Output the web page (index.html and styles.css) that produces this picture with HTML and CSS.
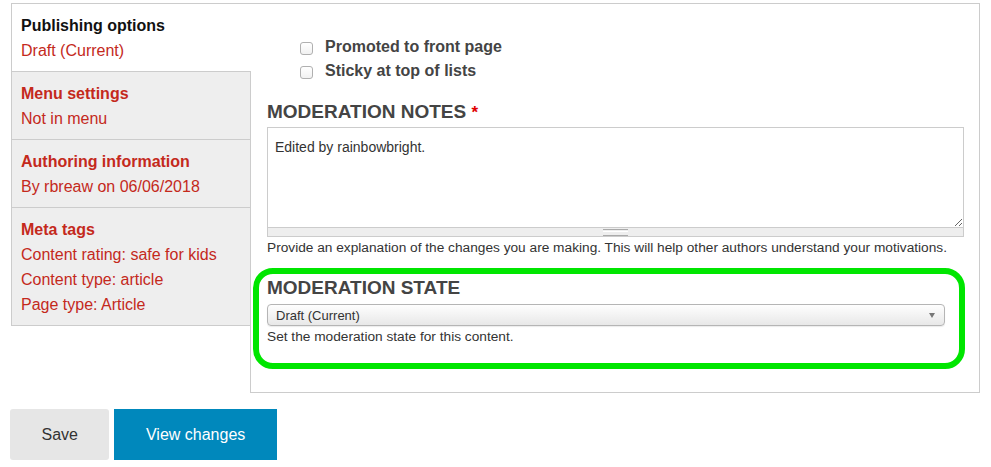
FILE: index.html
```html
<!DOCTYPE html>
<html lang="en">
<head>
    <meta http-equiv="Content-Type" content="text/html; charset=UTF-8">
    <title>Edit content</title>
    <link rel="stylesheet" href="styles.css">
</head>
<body>
    <!-- Vertical Tabs Section -->
    <div class="vertical-tabs">
        <ul class="tabs-menu">
            <li class="tab selected">
                <strong class="tab-title">Publishing options</strong>
                <span class="tab-summary">Draft (Current)</span>
            </li>
            <li class="tab">
                <strong class="tab-title">Menu settings</strong>
                <span class="tab-summary">Not in menu</span>
            </li>
            <li class="tab">
                <strong class="tab-title">Authoring information</strong>
                <span class="tab-summary">By rbreaw on 06/06/2018</span>
            </li>
            <li class="tab">
                <strong class="tab-title">Meta tags</strong>
                <span class="tab-summary">Content rating: safe for kids</span>
                <span class="tab-summary">Content type: article</span>
                <span class="tab-summary">Page type: Article</span>
            </li>
        </ul>

        <div class="tabs-pane">
            <div class="checkbox-list">
                <label class="checkbox-item"><input type="checkbox">Promoted to front page</label>
                <label class="checkbox-item"><input type="checkbox">Sticky at top of lists</label>
            </div>

            <div class="field">
                <h3 class="field-label">MODERATION NOTES <span class="required">*</span></h3>
                <div class="textarea-wrap">
                    <textarea>Edited by rainbowbright.</textarea>
                    <div class="grippie"></div>
                </div>
                <div class="description">Provide an explanation of the changes you are making. This will help other authors understand your motivations.</div>
            </div>

            <!-- Highlighted field -->
            <div class="field highlight">
                <h3 class="field-label">MODERATION STATE</h3>
                <div class="select-wrap">
                    <select>
                        <option>Draft (Current)</option>
                        <option>Published</option>
                    </select>
                </div>
                <div class="description">Set the moderation state for this content.</div>
            </div>
        </div>
    </div>

    <!-- Form Actions -->
    <div class="actions">
        <button class="btn">Save</button>
        <button class="btn btn-primary">View changes</button>
    </div>
</body>
</html>
```

FILE: styles.css
```css
/* General Reset */
* {
    margin: 0;
    padding: 0;
    box-sizing: border-box;
    font-family: "Liberation Sans", Arial, sans-serif;
}

body {
    background-color: #FFFFFF;
    color: #333333;
}

/* Vertical Tabs */
.vertical-tabs {
    display: flex;
    align-items: flex-start;
    width: 969px;
    margin: 3px 0 0 11px;
}

.tabs-menu {
    list-style: none;
    width: 239px;
    flex-shrink: 0;
    border-left: 1px solid #CCCCCC;
    border-top: 1px solid #CCCCCC;
}

.tab {
    position: relative;
    padding: 9px 9px 8px;
    background-color: #EEEEEE;
    border-bottom: 1px solid #CCCCCC;
    font-size: 16px;
    line-height: 25px;
    color: #C4291C;
}

.tab.selected {
    background-color: #FFFFFF;
    margin-right: -1px;
    z-index: 1;
}

.tab-title,
.tab-summary {
    display: block;
}

.tab.selected .tab-title {
    color: #111111;
}

/* Tab Pane */
.tabs-pane {
    flex-grow: 1;
    border: 1px solid #CCCCCC;
    padding: 31px 15px 23px 16px;
}

.checkbox-item {
    display: flex;
    align-items: center;
    padding-left: 33px;
    font-size: 16px;
    font-weight: bold;
    line-height: 24px;
    color: #444444;
}

.checkbox-item input {
    appearance: none;
    -webkit-appearance: none;
    width: 13px;
    height: 13px;
    margin: 3px 12px 0 0;
    border: 1px solid #B0B0B0;
    border-radius: 3px;
    background: linear-gradient(#FFFFFF, #F1F1F1);
}

.field {
    margin-top: 18px;
}

.field-label {
    font-size: 19px;
    line-height: 22px;
    font-weight: bold;
    color: #444444;
}

.required {
    color: #E00000;
    font-size: 17px;
}

/* Textarea */
.textarea-wrap {
    margin-top: 3px;
}

.textarea-wrap textarea {
    display: block;
    width: 100%;
    height: 101px;
    padding: 10px 7px;
    border: 1px solid #CCCCCC;
    font-size: 14px;
    line-height: 18px;
    color: #333333;
    resize: vertical;
    outline: none;
}

.grippie {
    height: 9px;
    background-color: #EEEEEE;
    border: 1px solid #CCCCCC;
    border-top: none;
    display: flex;
    justify-content: center;
    align-items: center;
}

.grippie::before {
    content: "";
    width: 25px;
    height: 5px;
    border-top: 1px solid #AAAAAA;
    border-bottom: 1px solid #AAAAAA;
    background: linear-gradient(#FFFFFF 1px, #AAAAAA 1px, #AAAAAA 2px, #FFFFFF 2px);
    background-size: 100% 1px;
    background-position: 0 1px;
    background-repeat: no-repeat;
}

.description {
    margin-top: 3px;
    font-size: 13.7px;
    line-height: 16px;
    color: #333333;
}

/* Highlighted field */
.highlight {
    margin: 12px -1px 0 -14px;
    padding: 3px 14px 18px 8px;
    border: 6px solid #00E600;
    border-radius: 20px;
}

.select-wrap {
    position: relative;
    margin-top: 5px;
}

.select-wrap select {
    appearance: none;
    -webkit-appearance: none;
    display: block;
    width: 100%;
    height: 22px;
    padding: 0 8px;
    border: 1px solid #B5B5B5;
    border-radius: 4px;
    background: linear-gradient(#FEFEFE, #E8E8E8);
    font-size: 13px;
    color: #333333;
    box-shadow: 0 1px 1px rgba(0, 0, 0, 0.08);
}

.select-wrap::after {
    content: "";
    position: absolute;
    right: 10px;
    top: 9px;
    border-left: 3px solid transparent;
    border-right: 3px solid transparent;
    border-top: 5px solid #777777;
}

/* Form Actions */
.actions {
    display: flex;
    gap: 5px;
    margin: 16px 0 0 10px;
}

.btn {
    height: 51px;
    padding: 0 31.5px;
    border: none;
    border-radius: 3px;
    background-color: #E6E6E6;
    color: #333333;
    font-size: 16px;
    cursor: pointer;
}

.btn-primary {
    border-radius: 0;
    background-color: #0088BC;
    color: #FFFFFF;
}
```
